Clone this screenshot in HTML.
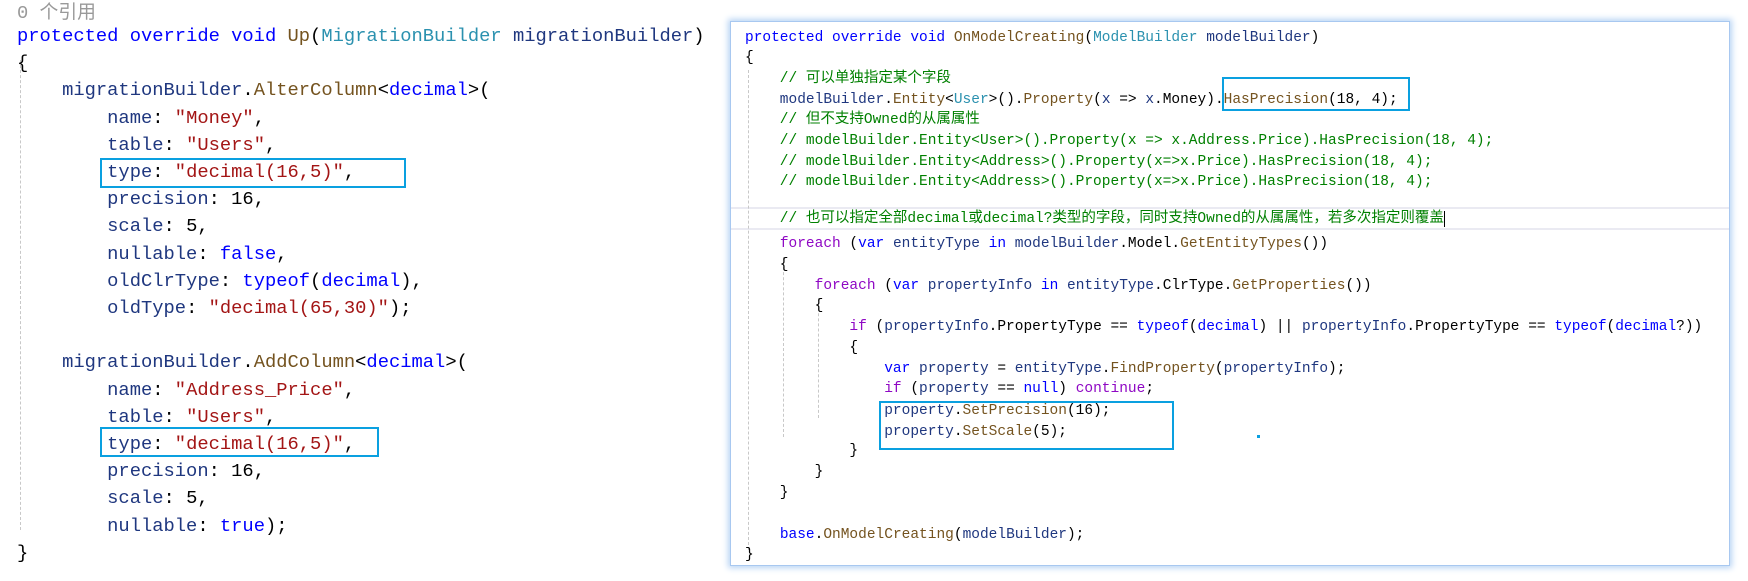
<!DOCTYPE html>
<html><head><meta charset="utf-8"><style>
body{margin:0;width:1748px;height:581px;background:#fff;overflow:hidden;position:relative}
.L{position:absolute;white-space:pre;font-family:"Liberation Mono","Noto Sans CJK SC",monospace;color:#1f377f}
.a{font-size:18.8px;line-height:27.2px;left:17px;height:27.2px}
.b{font-size:14.5px;line-height:20.7px;left:745px;height:20.7px}
.k{color:#0000ff}.t{color:#2b91af}.m{color:#74531f}.s{color:#a31515}.c{color:#008000}.p{color:#8f08c4}.x{color:#000}
.box{position:absolute;border:2px solid #0aa0e0;box-sizing:border-box}
.g{position:absolute;border-left:1px dashed #c8c8c8;width:0}
#panel{position:absolute;left:730px;top:21px;width:1000px;height:545px;background:#fff;box-shadow:0 0 6px 2px #b8d4f4;border:1px solid #a8c8f0;box-sizing:border-box}
</style></head><body>
<div class="L a" style="top:0px;color:#999">0 个引用</div>
<div class="g" style="left:20px;top:60px;height:470px"></div>
<div class="L a" style="top:23px"><span class="k">protected override void </span><span class="m">Up</span><span class="x">(</span><span class="t">MigrationBuilder</span> migrationBuilder<span class="x">)</span></div>
<div class="L a x" style="top:50px">{</div>
<div class="L a" style="top:77px">    migrationBuilder<span class="x">.</span><span class="m">AlterColumn</span><span class="x">&lt;</span><span class="k">decimal</span><span class="x">&gt;(</span></div>
<div class="L a" style="top:105px">        name<span class="x">: </span><span class="s">"Money"</span><span class="x">,</span></div>
<div class="L a" style="top:132px">        table<span class="x">: </span><span class="s">"Users"</span><span class="x">,</span></div>
<div class="L a" style="top:159px">        type<span class="x">: </span><span class="s">"decimal(16,5)"</span><span class="x">,</span></div>
<div class="L a" style="top:186px">        precision<span class="x">: 16,</span></div>
<div class="L a" style="top:213px">        scale<span class="x">: 5,</span></div>
<div class="L a" style="top:241px">        nullable<span class="x">: </span><span class="k">false</span><span class="x">,</span></div>
<div class="L a" style="top:268px">        oldClrType<span class="x">: </span><span class="k">typeof</span><span class="x">(</span><span class="k">decimal</span><span class="x">),</span></div>
<div class="L a" style="top:295px">        oldType<span class="x">: </span><span class="s">"decimal(65,30)"</span><span class="x">);</span></div>
<div class="L a" style="top:349px">    migrationBuilder<span class="x">.</span><span class="m">AddColumn</span><span class="x">&lt;</span><span class="k">decimal</span><span class="x">&gt;(</span></div>
<div class="L a" style="top:377px">        name<span class="x">: </span><span class="s">"Address_Price"</span><span class="x">,</span></div>
<div class="L a" style="top:404px">        table<span class="x">: </span><span class="s">"Users"</span><span class="x">,</span></div>
<div class="L a" style="top:431px">        type<span class="x">: </span><span class="s">"decimal(16,5)"</span><span class="x">,</span></div>
<div class="L a" style="top:458px">        precision<span class="x">: 16,</span></div>
<div class="L a" style="top:485px">        scale<span class="x">: 5,</span></div>
<div class="L a" style="top:513px">        nullable<span class="x">: </span><span class="k">true</span><span class="x">);</span></div>
<div class="L a x" style="top:540px">}</div>
<div class="box" style="left:100px;top:158px;width:306px;height:30px"></div>
<div class="box" style="left:100px;top:427px;width:279px;height:30px"></div>

<div id="panel"></div>
<div style="position:absolute;left:731px;top:207px;width:998px;height:23px;border-top:2px solid #eaeaf2;border-bottom:2px solid #eaeaf2;box-sizing:border-box"></div>
<div class="g" style="left:748px;top:70px;height:480px"></div>
<div class="g" style="left:783px;top:257px;height:180px"></div>
<div class="g" style="left:818px;top:298px;height:120px"></div>
<div class="L b" style="top:28px"><span class="k">protected override void </span><span class="m">OnModelCreating</span><span class="x">(</span><span class="t">ModelBuilder</span> modelBuilder<span class="x">)</span></div>
<div class="L b x" style="top:48px">{</div>
<div class="L b c" style="top:69px">    // 可以单独指定某个字段</div>
<div class="L b" style="top:90px">    modelBuilder<span class="x">.</span><span class="m">Entity</span><span class="x">&lt;</span><span class="t">User</span><span class="x">&gt;().</span><span class="m">Property</span><span class="x">(</span>x <span class="x">=&gt;</span> x<span class="x">.Money).</span><span class="m">HasPrecision</span><span class="x">(18, 4);</span></div>
<div class="L b c" style="top:110px">    // 但不支持Owned的从属属性</div>
<div class="L b c" style="top:131px">    // modelBuilder.Entity&lt;User&gt;().Property(x =&gt; x.Address.Price).HasPrecision(18, 4);</div>
<div class="L b c" style="top:152px">    // modelBuilder.Entity&lt;Address&gt;().Property(x=&gt;x.Price).HasPrecision(18, 4);</div>
<div class="L b c" style="top:172px">    // modelBuilder.Entity&lt;Address&gt;().Property(x=&gt;x.Price).HasPrecision(18, 4);</div>
<div class="L b c" style="top:209px">    // 也可以指定全部decimal或decimal?类型的字段，同时支持Owned的从属属性，若多次指定则覆盖<span style="border-left:1px solid #000"></span></div>
<div class="L b" style="top:234px">    <span class="p">foreach</span><span class="x"> (</span><span class="k">var</span> entityType <span class="k">in</span> modelBuilder<span class="x">.Model.</span><span class="m">GetEntityTypes</span><span class="x">())</span></div>
<div class="L b x" style="top:255px">    {</div>
<div class="L b" style="top:276px">        <span class="p">foreach</span><span class="x"> (</span><span class="k">var</span> propertyInfo <span class="k">in</span> entityType<span class="x">.ClrType.</span><span class="m">GetProperties</span><span class="x">())</span></div>
<div class="L b x" style="top:296px">        {</div>
<div class="L b" style="top:317px">            <span class="p">if</span><span class="x"> (</span>propertyInfo<span class="x">.PropertyType == </span><span class="k">typeof</span><span class="x">(</span><span class="k">decimal</span><span class="x">) || </span>propertyInfo<span class="x">.PropertyType == </span><span class="k">typeof</span><span class="x">(</span><span class="k">decimal</span><span class="x">?))</span></div>
<div class="L b x" style="top:338px">            {</div>
<div class="L b" style="top:359px">                <span class="k">var</span> property <span class="x">=</span> entityType<span class="x">.</span><span class="m">FindProperty</span><span class="x">(</span>propertyInfo<span class="x">);</span></div>
<div class="L b" style="top:379px">                <span class="p">if</span><span class="x"> (</span>property <span class="x">== </span><span class="k">null</span><span class="x">) </span><span class="p">continue</span><span class="x">;</span></div>
<div class="L b" style="top:401px">                property<span class="x">.</span><span class="m">SetPrecision</span><span class="x">(16);</span></div>
<div class="L b" style="top:422px">                property<span class="x">.</span><span class="m">SetScale</span><span class="x">(5);</span></div>
<div class="L b x" style="top:441px">            }</div>
<div class="L b x" style="top:462px">        }</div>
<div class="L b x" style="top:483px">    }</div>
<div class="L b" style="top:525px">    <span class="k">base</span><span class="x">.</span><span class="m">OnModelCreating</span><span class="x">(</span>modelBuilder<span class="x">);</span></div>
<div class="L b x" style="top:545px">}</div>
<div class="box" style="left:1222px;top:77px;width:188px;height:34px"></div>
<div class="box" style="left:879px;top:401px;width:295px;height:49px"></div>
<div style="position:absolute;left:1257px;top:435px;width:3px;height:3px;background:#0aa0e0"></div>
</body></html>
